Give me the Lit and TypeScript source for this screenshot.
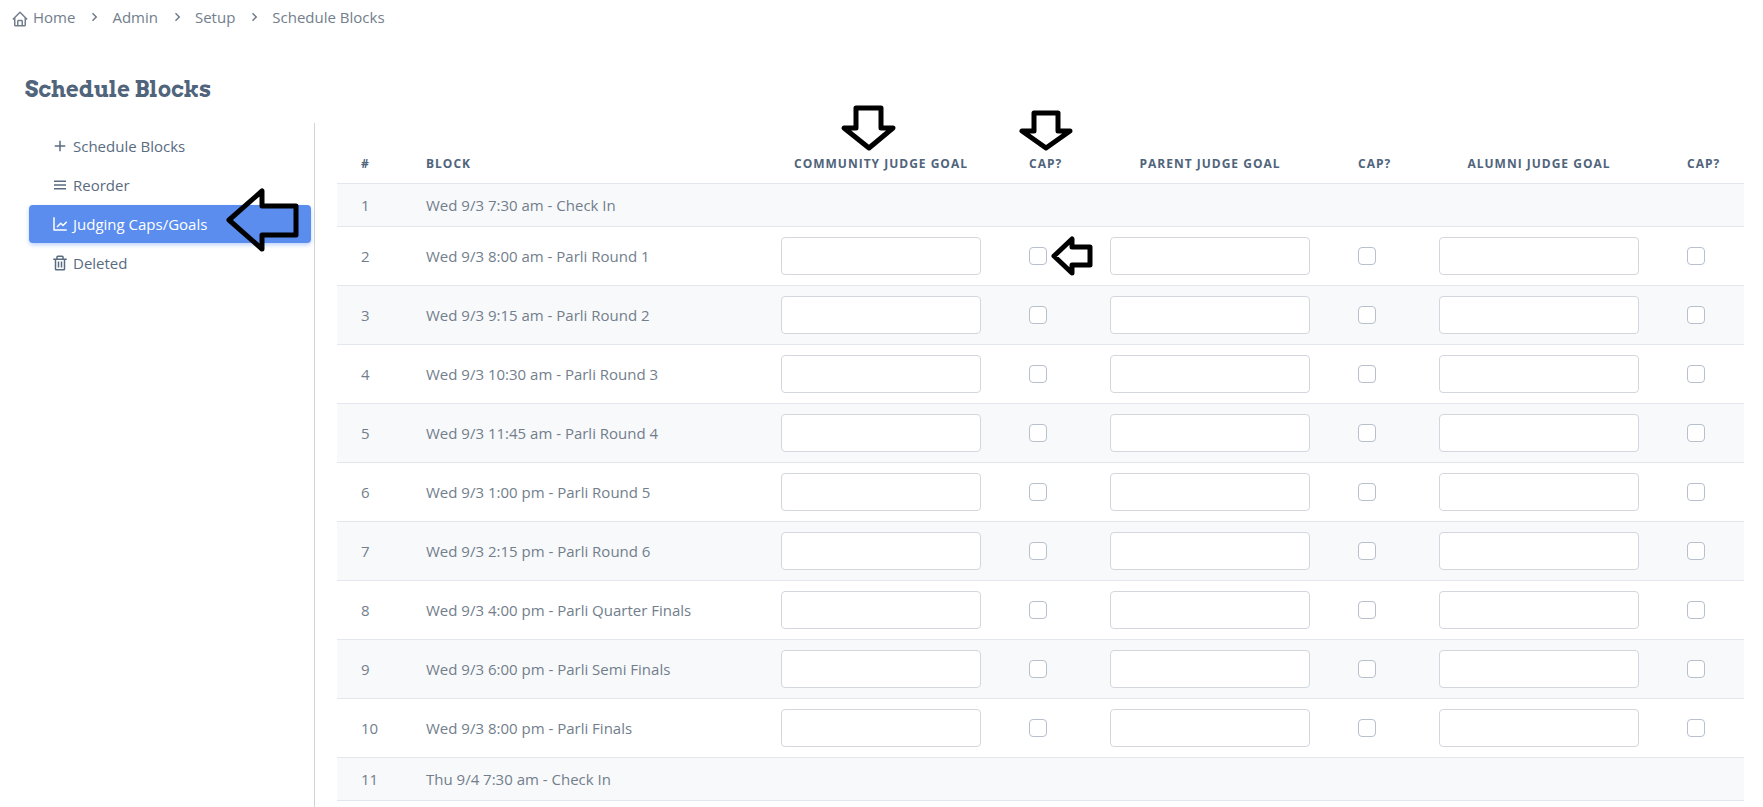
import { LitElement, html, svg, css, nothing } from "lit";
import { customElement, property } from "lit/decorators.js";

const ICONS: Record<string, string[]> = {
  home: [
    "M3 13h1v7c0 1.103.897 2 2 2h12c1.103 0 2-.897 2-2v-7h1a1 1 0 0 0 .707-1.707l-9-9a.999.999 0 0 0-1.414 0l-9 9A1 1 0 0 0 3 13zm7 7v-5h4v5h-4zm2-15.586 6 6V15l.001 5H16v-5c0-1.103-.897-2-2-2h-4c-1.103 0-2 .897-2 2v5H6v-9.586l6-6z",
  ],
  chevron: ["M10.707 17.707 16.414 12l-5.707-5.707-1.414 1.414L13.586 12l-4.293 4.293z"],
  plus: ["M19 11h-6V5h-2v6H5v2h6v6h2v-6h6z"],
  menu: ["M4 6h16v2H4zm0 5h16v2H4zm0 5h16v2H4z"],
  chart: [
    "M3 3v17a1 1 0 0 0 1 1h17v-2H5V3H3z",
    "M15.293 14.707a.999.999 0 0 0 1.414 0l5-5-1.414-1.414L16 12.586l-2.293-2.293a.999.999 0 0 0-1.414 0l-5 5 1.414 1.414L13 12.414l2.293 2.293z",
  ],
  trash: [
    "M5 20a2 2 0 0 0 2 2h10a2 2 0 0 0 2-2V8h2V6h-4V4a2 2 0 0 0-2-2H9a2 2 0 0 0-2 2v2H3v2h2zM9 4h6v2H9zM8 8h9v12H7V8z",
    "M9 10h2v8H9zm4 0h2v8h-2z",
  ],
};

@customElement("ui-icon")
class UiIcon extends LitElement {
  static styles = css`
    :host {
      display: block;
      flex: none;
      width: 18px;
      height: 18px;
    }
    .glyph {
      display: block;
      width: 100%;
      height: 100%;
      fill: currentColor;
    }
  `;
  @property() name = "";
  render() {
    return html`<svg class="glyph" viewBox="0 0 24 24" aria-hidden="true">
      ${(ICONS[this.name] ?? []).map((d) => svg`<path d=${d}></path>`)}
    </svg>`;
  }
}

const ARROWS: Record<string, { w: number; h: number; points: string }> = {
  nav: { w: 73, h: 64, points: "3,32 36,3 36,18 70,18 70,47 36,47 36,61" },
  goal: { w: 53, h: 45, points: "14,2 39,2 39,22 51,22 27,42 2,22 14,22" },
  cap: { w: 52, h: 40, points: "14,2 38,2 38,20 50,20 26,37 2,20 14,20" },
  box: { w: 41, h: 40, points: "3,20 21,3 21,11 39,11 39,29 21,29 21,37" },
};

/* Hand-drawn style callout arrow */
@customElement("callout-arrow")
class CalloutArrow extends LitElement {
  static styles = css`
    :host {
      display: block;
      pointer-events: none;
    }
    .arrow {
      display: block;
      overflow: visible;
      fill: none;
      stroke: #000;
      stroke-width: 5px;
      stroke-linejoin: round;
    }
  `;
  @property() kind = "nav";
  render() {
    const a = ARROWS[this.kind];
    return html`<svg class="arrow" width=${a.w} height=${a.h} aria-hidden="true">
      ${svg`<polygon points=${a.points}></polygon>`}
    </svg>`;
  }
}

interface Block {
  name: string;
  judged: boolean;
}

const BLOCKS: Block[] = [
  { name: "Wed 9/3 7:30 am - Check In", judged: false },
  { name: "Wed 9/3 8:00 am - Parli Round 1", judged: true },
  { name: "Wed 9/3 9:15 am - Parli Round 2", judged: true },
  { name: "Wed 9/3 10:30 am - Parli Round 3", judged: true },
  { name: "Wed 9/3 11:45 am - Parli Round 4", judged: true },
  { name: "Wed 9/3 1:00 pm - Parli Round 5", judged: true },
  { name: "Wed 9/3 2:15 pm - Parli Round 6", judged: true },
  { name: "Wed 9/3 4:00 pm - Parli Quarter Finals", judged: true },
  { name: "Wed 9/3 6:00 pm - Parli Semi Finals", judged: true },
  { name: "Wed 9/3 8:00 pm - Parli Finals", judged: true },
  { name: "Thu 9/4 7:30 am - Check In", judged: false },
];

const POOLS = ["Community", "Parent", "Alumni"];

@customElement("goals-table")
class GoalsTable extends LitElement {
  static styles = css`
    :host {
      display: block;
    }
    .table {
      width: 100%;
      border-collapse: separate;
      border-spacing: 0;
      table-layout: fixed;
    }
    .col-num {
      width: 65px;
    }
    .col-goal {
      width: 248px;
    }
    .col-cap {
      width: 81px;
    }
    .th {
      position: relative;
      height: 39px;
      padding: 0 24px;
      border-bottom: 1px solid #e3e7eb;
      box-sizing: border-box;
      color: #50647b;
      font-size: 12px;
      font-weight: 700;
      line-height: 18px;
      letter-spacing: 1px;
      text-align: left;
      text-transform: uppercase;
      white-space: nowrap;
    }
    .th-goal {
      text-align: center;
    }
    .td {
      position: relative;
      height: 43px;
      padding: 0 24px;
      border-bottom: 1px solid #e3e7eb;
      box-sizing: border-box;
      white-space: nowrap;
    }
    .judged .td {
      height: 59px;
    }
    .row:nth-child(odd) {
      background: #f8f9fb;
    }
    .goal {
      display: block;
      width: 100%;
      height: 38px;
      padding: 0 12px;
      box-sizing: border-box;
      border: 1px solid #d3d7dd;
      border-radius: 4px;
      background: #fff;
      color: #475f7b;
      font: inherit;
    }
    .cap {
      display: block;
      appearance: none;
      width: 18px;
      height: 18px;
      margin: 0;
      border: 1px solid #b8c0cb;
      border-radius: 4px;
      background: #fff;
    }
    .cap:checked {
      background: #5a8dee;
    }
    .mark-goal,
    .mark-cap,
    .mark-box {
      position: absolute;
      z-index: 1;
    }
    .mark-goal {
      left: 85px;
      top: -39px;
    }
    .mark-cap {
      left: 15px;
      top: -34px;
    }
    .mark-box {
      left: 46px;
      top: 9px;
    }
  `;

  private cells(block: Block, row: number) {
    return POOLS.map((pool, i) =>
      block.judged
        ? html`<td class="td">
              <input class="goal" type="text" aria-label="${pool} judge goal, ${block.name}" />
            </td>
            <td class="td">
              <input class="cap" type="checkbox" aria-label="${pool} cap, ${block.name}" />
              ${row === 1 && i === 0
                ? html`<callout-arrow class="mark-box" kind="box"></callout-arrow>`
                : nothing}
            </td>`
        : html`<td class="td"></td>
            <td class="td"></td>`
    );
  }

  render() {
    return html`<table class="table">
      <colgroup>
        <col class="col-num" />
        <col />
        ${POOLS.map(() => html`<col class="col-goal" /><col class="col-cap" />`)}
      </colgroup>
      <thead>
        <tr>
          <th class="th" scope="col">#</th>
          <th class="th" scope="col">Block</th>
          ${POOLS.map(
            (pool, i) => html`<th class="th th-goal" scope="col">
                ${pool} Judge Goal
                ${i === 0 ? html`<callout-arrow class="mark-goal" kind="goal"></callout-arrow>` : nothing}
              </th>
              <th class="th" scope="col">
                Cap?
                ${i === 0 ? html`<callout-arrow class="mark-cap" kind="cap"></callout-arrow>` : nothing}
              </th>`
          )}
        </tr>
      </thead>
      <tbody>
        ${BLOCKS.map(
          (block, row) => html`<tr class="row ${block.judged ? "judged" : ""}">
            <td class="td">${row + 1}</td>
            <td class="td">${block.name}</td>
            ${this.cells(block, row)}
          </tr>`
        )}
      </tbody>
    </table>`;
  }
}

const CRUMBS = ["Home", "Admin", "Setup", "Schedule Blocks"];
const NAV = [
  { icon: "plus", label: "Schedule Blocks", active: false },
  { icon: "menu", label: "Reorder", active: false },
  { icon: "chart", label: "Judging Caps/Goals", active: true },
  { icon: "trash", label: "Deleted", active: false },
];

@customElement("app-root")
class AppRoot extends LitElement {
  static styles = css`
    :host {
      display: flex;
      flex-direction: column;
      min-height: 100vh;
      box-sizing: border-box;
      background: #fff;
      color: #727e8c;
      font-family: "Open Sans", "Noto Sans", sans-serif;
      font-size: 15px;
      line-height: 22px;
    }
    .crumbs {
      display: flex;
      gap: 10px;
      margin: 0;
      padding: 6px 11px 0;
      list-style: none;
    }
    .crumb,
    .crumb-link {
      display: flex;
      align-items: center;
      color: inherit;
      text-decoration: none;
    }
    .crumb {
      gap: 9px;
    }
    .crumb-link {
      gap: 4px;
    }
    .home {
      align-self: flex-end;
    }
    .title {
      margin: 46px 25px 0;
      color: #50647b;
      font-family: Arvo, "DejaVu Serif", serif;
      font-size: 22px;
      font-weight: 700;
      line-height: 30px;
    }
    .body {
      display: flex;
      flex: 1;
      margin-top: 19px;
      padding-right: 19px;
    }
    .nav {
      display: flex;
      flex: none;
      flex-direction: column;
      gap: 1px;
      width: 282px;
      padding: 4px 3px 0 29px;
      border-right: 1px solid #d0d4da;
    }
    .nav-link {
      position: relative;
      display: flex;
      align-items: center;
      gap: 4px;
      height: 38px;
      padding: 0 22px;
      border-radius: 4px;
      color: #596b80;
      text-decoration: none;
    }
    .nav-link.active {
      background: #5a8dee;
      box-shadow: 0 2px 4px rgba(90, 141, 238, 0.4);
      color: #fff;
      font-weight: 500;
    }
    .mark-nav {
      position: absolute;
      top: -17px;
      right: 12px;
    }
    .main {
      flex: 1;
      min-width: 0;
      padding: 22px 0 0 22px;
    }
  `;

  render() {
    return html`
      <nav aria-label="Breadcrumb">
        <ol class="crumbs">
          ${CRUMBS.map(
            (c, i) => html`<li class="crumb">
              ${i ? html`<ui-icon name="chevron"></ui-icon>` : nothing}
              <a class="crumb-link" href="#">${i ? nothing : html`<ui-icon class="home" name="home"></ui-icon>`}${c}</a>
            </li>`
          )}
        </ol>
      </nav>
      <h1 class="title">Schedule Blocks</h1>
      <div class="body">
        <nav class="nav" aria-label="Schedule sections">
          ${NAV.map(
            (n) => html`<a class="nav-link ${n.active ? "active" : ""}" href="#">
              <ui-icon name=${n.icon}></ui-icon>${n.label}
              ${n.active ? html`<callout-arrow class="mark-nav" kind="nav"></callout-arrow>` : nothing}
            </a>`
          )}
        </nav>
        <main class="main"><goals-table></goals-table></main>
      </div>
    `;
  }
}
